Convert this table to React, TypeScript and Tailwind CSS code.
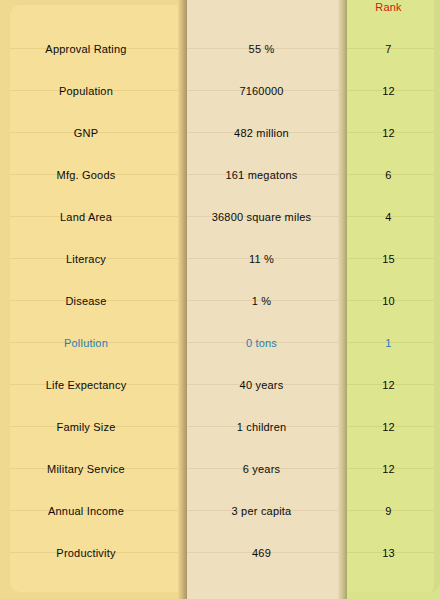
import React from "react";

interface Stat {
  label: string;
  value: string;
  rank: number;
  highlight?: boolean;
}

const stats: Stat[] = [
  { label: "Approval Rating", value: "55 %", rank: 7 },
  { label: "Population", value: "7160000", rank: 12 },
  { label: "GNP", value: "482 million", rank: 12 },
  { label: "Mfg. Goods", value: "161 megatons", rank: 6 },
  { label: "Land Area", value: "36800 square miles", rank: 4 },
  { label: "Literacy", value: "11 %", rank: 15 },
  { label: "Disease", value: "1 %", rank: 10 },
  { label: "Pollution", value: "0 tons", rank: 1, highlight: true },
  { label: "Life Expectancy", value: "40 years", rank: 12 },
  { label: "Family Size", value: "1 children", rank: 12 },
  { label: "Military Service", value: "6 years", rank: 12 },
  { label: "Annual Income", value: "3 per capita", rank: 9 },
  { label: "Productivity", value: "469", rank: 13 },
];

// faint rule through the middle of each row
const rowLine =
  "bg-[linear-gradient(to_bottom,transparent_20px,rgba(120,90,20,0.11)_20px,rgba(120,90,20,0.11)_21px,transparent_21px)]";

const Cell = ({ text, highlight, className }: { text: string; highlight?: boolean; className?: string }) => (
  <div
    className={`h-[42px] flex items-center justify-center ${rowLine} ${
      highlight ? "text-[#1f7fb8]" : "text-[#0c0c0c]"
    } ${className ?? ""}`}
  >
    <span className="leading-none tracking-[0.2px]">{text}</span>
  </div>
);

export default function App() {
  return (
    <div className="w-[440px] h-[599px] flex overflow-hidden font-['Liberation_Sans',Arial,sans-serif] text-[11px] bg-[#ecd590]">
      {/* Indicator column */}
      <div className="w-[178px] flex flex-col bg-[#efd88f] pl-[10px] pt-[5px] pb-[7px]">
        <div className="flex-1 flex flex-col rounded-tl-[10px] rounded-bl-[10px] bg-[#f6df98]">
          <div className="h-[23px]" />
          {stats.map((s) => (
            <Cell key={s.label} text={s.label} highlight={s.highlight} className="pr-[16px]" />
          ))}
        </div>
      </div>
      <div className="w-[9px] bg-gradient-to-r from-[#eed690] via-[#cdb57a] to-[#a99466]" />

      {/* Value column */}
      <div className="w-[151px] flex flex-col bg-[#eedfbe]">
        <div className="h-[28px]" />
        {stats.map((s) => (
          <Cell key={s.label} text={s.value} highlight={s.highlight} className="pr-[2px]" />
        ))}
      </div>
      <div className="w-[9px] bg-gradient-to-r from-[#e9d9b6] via-[#cfc290] to-[#a8a66c]" />

      {/* Rank column */}
      <div className="flex-1 flex flex-col bg-[#d9e38c] pb-[7px]">
        <div className="flex-1 flex flex-col rounded-br-[10px] bg-[#dde68e] border-r-[6px] border-[#d3dc86]">
          <div className="h-[28px] flex justify-center pt-[2px]">
            <span className="leading-none tracking-[0.2px] text-[#d0200a] pr-[4px]">Rank</span>
          </div>
          {stats.map((s) => (
            <Cell key={s.label} text={String(s.rank)} highlight={s.highlight} className="pr-[4px]" />
          ))}
        </div>
      </div>
    </div>
  );
}
